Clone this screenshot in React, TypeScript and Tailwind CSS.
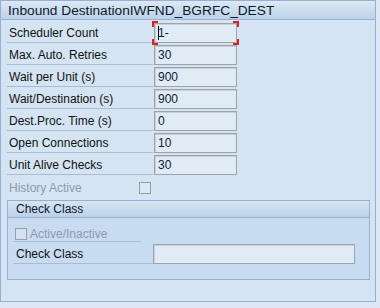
import React from "react";

const rows = [
  { label: "Scheduler Count", value: "1-", focused: true },
  { label: "Max. Auto. Retries", value: "30" },
  { label: "Wait per Unit (s)", value: "900" },
  { label: "Wait/Destination (s)", value: "900" },
  { label: "Dest.Proc. Time (s)", value: "0" },
  { label: "Open Connections", value: "10" },
  { label: "Unit Alive Checks", value: "30" },
];

function Field({ value, width, focused }: { value: string; width: string; focused?: boolean }) {
  return (
    <div className={`relative h-[20px] ${width}`}>
      <div className="h-full w-full border border-[#9da3aa] bg-[#e0ebf6] shadow-[inset_1px_1px_0_#c9cfd6] pl-[3px] text-[12px] leading-[18px] text-[#10203a]">
        {focused && <span className="inline-block w-px h-[14px] bg-black align-[-3px] mr-[-1px]" />}
        {value}
      </div>
      {focused && (
        <>
          <span className="absolute -left-[2px] -top-[2px] w-[6px] h-[6px] border-l-2 border-t-2 border-[#e0201c]" />
          <span className="absolute -right-[2px] -top-[2px] w-[6px] h-[6px] border-r-2 border-t-2 border-[#e0201c]" />
          <span className="absolute -left-[2px] -bottom-[2px] w-[6px] h-[6px] border-l-2 border-b-2 border-[#e0201c]" />
          <span className="absolute -right-[2px] -bottom-[2px] w-[6px] h-[6px] border-r-2 border-b-2 border-[#e0201c]" />
        </>
      )}
    </div>
  );
}

export default function App() {
  return (
    <div className="w-[380px] h-[308px] bg-[#dde8f4] overflow-hidden" style={{ fontFamily: '"Liberation Sans", Arial, sans-serif' }}>
      <div className="w-[376px] h-[302px] border border-[#94b0d2] bg-[#d4e4f3] flex flex-col">
        {/* Title bar */}
        <div className="h-[19px] shrink-0 border-b border-[#94b0d2] bg-gradient-to-b from-[#dde8f3] to-[#bcd2e8] pl-[7px] text-[13.7px] leading-[19px] text-[#0c1a30]">
          Inbound DestinationIWFND_BGRFC_DEST
        </div>

        <div className="flex flex-col pt-[2px] pl-[6px]">
          {rows.map((r) => (
            <div key={r.label} className="flex items-start h-[22px]">
              <div className="w-[146px] h-[21px] border-b border-[#a9bcd3] pl-[2px] text-[12px] leading-[22px] text-[#111]">
                {r.label}
              </div>
              <div className="pt-[1px] pl-[1px]">
                <Field value={r.value} width="w-[83px]" focused={r.focused} />
              </div>
            </div>
          ))}
          <div className="flex items-center h-[24px]">
            <div className="w-[132px] pl-[2px] text-[12px] text-[#8d9bad]">History Active</div>
            <div className="w-[12px] h-[12px] border border-[#9a9fa5] bg-[#dbe7f3]" />
          </div>
        </div>

        {/* Check Class group */}
        <div className="ml-[6px] w-[363px] h-[80px] border border-[#94b0d2] bg-[#c8dcf1] flex flex-col">
          <div className="h-[17px] shrink-0 border-b border-[#94b0d2] bg-gradient-to-b from-[#d7e4f2] to-[#bcd1e7] pl-[8px] text-[12px] leading-[16px] text-[#0c1a30]">
            Check Class
          </div>
          <div className="flex flex-col pl-[5px] pt-[8px]">
            <div className="flex items-center gap-[3px] w-[128px] h-[16px] border-b border-[#a9bcd3] pl-[2px]">
              <div className="w-[12px] h-[12px] border border-[#9a9fa5] bg-[#d3e2f1]" />
              <span className="text-[12px] text-[#8d9bad]">Active/Inactive</span>
            </div>
            <div className="flex items-start h-[22px] pt-[2px]">
              <div className="w-[140px] h-[20px] border-b border-[#a9bcd3] pl-[3px] text-[12px] leading-[20px] text-[#111]">
                Check Class
              </div>
              <Field value="" width="w-[202px]" />
            </div>
          </div>
        </div>
      </div>
    </div>
  );
}
